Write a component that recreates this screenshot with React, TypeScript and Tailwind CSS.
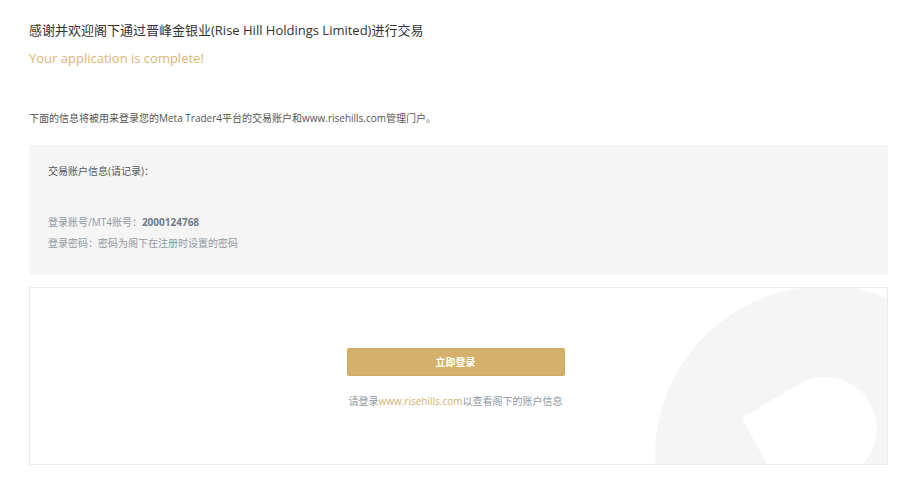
export default function App() {
  const font = { fontFamily: '"Open Sans", "Noto Sans CJK SC", sans-serif' };

  return (
    <div className="min-h-[503px] w-full bg-white pl-[29px] pr-[25px] pt-[20px]" style={font}>
      <h1 className="text-[13px] leading-[20px] text-[#333333]">
        感谢并欢迎阁下通过晋峰金银业(Rise Hill Holdings Limited)进行交易
      </h1>
      <p className="mt-[8px] text-[13px] leading-[20px] text-[#dbb676]">Your application is complete!</p>

      <p className="mt-[42px] text-[10px] leading-[16px] text-[#555555]">
        下面的信息将被用来登录您的Meta Trader4平台的交易账户和www.risehills.com管理门户。
      </p>

      <div className="mt-[19px] h-[130px] bg-[#f5f5f5] px-[19px] pt-[18px]">
        <p className="text-[10px] leading-[16px] text-[#555555]">交易账户信息(请记录)：</p>
        <p className="mt-[35px] text-[10px] leading-[16px] text-[#8f99a3]">
          登录账号/MT4账号：<span className="font-bold text-[#6f7a86]">2000124768</span>
        </p>
        <p className="mt-[5px] text-[10px] leading-[16px] text-[#8f99a3]">登录密码：密码为阁下在注册时设置的密码</p>
      </div>

      <div className="relative mt-[12px] h-[178px] overflow-hidden border border-[#ececec] bg-white">
        <svg className="absolute left-0 top-0" width="858" height="178" viewBox="0 0 858 178">
          <circle cx="795" cy="168" r="170" fill="#f5f5f5" />
          <path d="M712 130 L772 94 A52 52 0 1 1 769 186 L750 200 Z" fill="#ffffff" />
        </svg>
        <div className="relative flex flex-col items-center pr-[6px] pt-[60px]">
          <button
            type="button"
            className="h-[28px] w-[218px] rounded-[2px] border border-[#cfa862] bg-[#d5b06b] text-[10px] font-semibold text-white"
          >
            立即登录
          </button>
          <p className="mt-[17px] text-[10px] leading-[16px] text-[#8f99a3]">
            请登录<span className="text-[#d5b06b]">www.risehills.com</span>以查看阁下的账户信息
          </p>
        </div>
      </div>
    </div>
  );
}
